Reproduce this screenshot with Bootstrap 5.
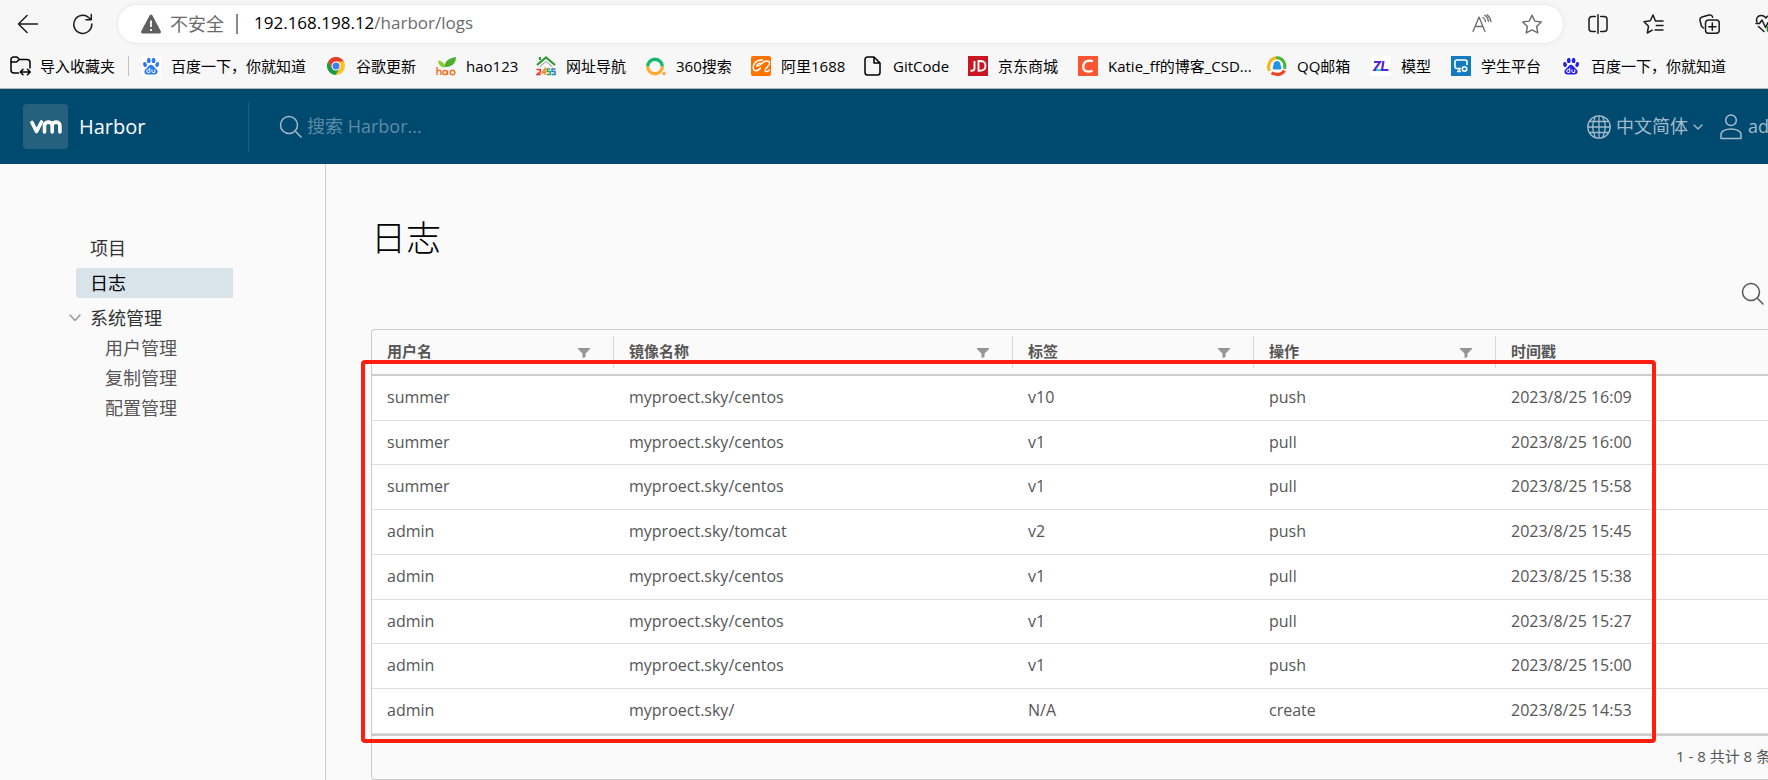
<!DOCTYPE html>
<html lang="zh-CN">
<head>
<meta charset="utf-8">
<meta name="viewport" content="width=device-width, initial-scale=1">
<title>Harbor</title>
<link href="https://cdn.jsdelivr.net/npm/bootstrap@5.3.0/dist/css/bootstrap.min.css" rel="stylesheet">
<style>
  body { font-family: "Open Sans", "Noto Sans CJK SC", sans-serif; font-size: 16px; background: #fafafa; color: #565656; overflow-x: hidden; }
  svg { display: block; flex: none; }
  a { color: inherit; text-decoration: none; }
  .plain { border: 0; background: none; padding: 0; color: inherit; display: block; }
  .stroke { fill: none; stroke: currentColor; stroke-linecap: round; stroke-linejoin: round; }

  /* browser chrome */
  .browser { background: #f7f7f7; color: #1b1b1b; border-bottom: 1px solid #b4b4b4; height: 89px; overflow: hidden; }
  .toolbar { height: 38px; margin-top: 5px; padding-left: 17px; gap: 34px; }
  .address { height: 38px; border-radius: 19px; background: #fff; box-shadow: 0 0 4px rgba(0,0,0,.1); padding: 0 20px 0 22px; margin-left: -9px; color: #6b6b6b; font-size: 17px; }
  .insecure { font-size: 18px; margin: 0 12px 0 8px; }
  .favourite { margin-left: 29px; }
  .bar { width: 2px; height: 20px; background: #8a8a8a; margin-right: 16px; }
  .url { font-size: 17px; line-height: 36px; padding-bottom: 2px; }
  .url b { font-weight: 400; color: #000; }
  .tools { width: 180px; margin-left: -9px; gap: 35px; overflow: hidden; }
  .marks { display: grid; grid-template-columns: 131px 185px 110px 100px 110px 105px 112px 105px 110px 189px 104px 80px 110px auto; font-size: 15px; line-height: 20px; color: #000; padding-left: 10px; margin-top: 13px; white-space: nowrap; }
  .marks a { display: flex; align-items: center; gap: 10px; }
  .marks a:first-child { border-right: 1px solid #c4c4c4; margin-right: 12px; gap: 9px; }

  /* application header */
  .app-header { height: 75px; background: #004a70; color: #a3bccb; padding-left: 23px; }
  .brand { width: 225px; color: #fff; font-size: 20px; gap: 11px; }
  .logo { width: 45px; height: 45px; border-radius: 4px; background: #25607f; }
  .search { border-left: 1px solid #1c5e80; height: 50px; padding-left: 30px; gap: 4px; }
  .search input { border: 0; background: none; color: #fff; padding: 0; font-size: 18px; outline: 0; }
  .search input::placeholder { color: #5d8ca6; opacity: 1; }
  .language { font-size: 18px; gap: 5px; }
  .account { width: 48px; gap: 6px; font-size: 18px; overflow: hidden; margin-left: 17px; }

  /* side navigation */
  .sidebar { width: 326px; border-right: 1px solid #ccc; padding: 69px 92px 0 76px; flex: none; }
  .sidebar a { display: block; height: 30px; line-height: 30px; padding-left: 14px; margin-bottom: 5px; color: #313131; font-size: 18px; }
  .sidebar a.active { background: #d9e4ea; color: #000; border-radius: 3px 0 0 3px; }
  .group { margin-left: -7px; color: #313131; font-size: 18px; line-height: 30px; gap: 9px; }
  .group svg { color: #999; }
  .sidebar .children a { padding-left: 29px; margin: 0; color: #565656; }

  /* log grid */
  main { min-width: 0; padding: 50px 0 0 45px; }
  h1 { font-size: 35px; font-weight: 300; line-height: 48px; color: #000; margin: 0; }
  .finder { height: 67px; padding: 20px 3px 0 0; align-items: flex-start; }
  .datagrid { border: 1px solid #ccc; border-right: 0; border-radius: 4px 0 0 4px; position: relative; }
  .datagrid table { width: 100%; table-layout: fixed; border-collapse: separate; border-spacing: 0; }
  .datagrid th { padding: 0; height: 46px; border-bottom: 2px solid #ccc; font-size: 15px; font-weight: 700; }
  .head { height: 32px; line-height: 28px; padding: 0 23px 2px 15px; border-right: 1px solid #d8d8d8; }
  th:last-child .head { border: 0; }
  .head svg { margin-top: 4px; }
  .datagrid td { height: 45px; padding: 0 15px 2px; background: #fff; border-bottom: 1px solid #ddd; line-height: 24px; }
  .datagrid tr:nth-child(4n+2) td { height: 44px; }
  .foot { border-top: 2px solid #ccc; height: 45px; font-size: 15px; padding-bottom: 2px; }
  .foot span { width: 92px; white-space: nowrap; overflow: hidden; }
  .callout { position: absolute; left: -11px; right: 112px; top: 30px; bottom: 36px; border: 4px solid #ff1e10; border-radius: 4px; pointer-events: none; }
</style>
</head>
<body>
<svg width="0" height="0" class="position-absolute" aria-hidden="true">
  <symbol id="paw" viewBox="0 0 20 20">
    <ellipse cx="4" cy="8.6" rx="1.9" ry="2.6" transform="rotate(-15 4 8.6)"/><ellipse cx="7.8" cy="4.4" rx="1.9" ry="2.7"/><ellipse cx="12.6" cy="4.4" rx="1.9" ry="2.7"/><ellipse cx="16.2" cy="8.6" rx="1.8" ry="2.6" transform="rotate(15 16.2 8.6)"/>
    <path d="M10 8.8c1.7 0 2.4 1.4 3.6 2.8 1.3 1.5 3.2 2.4 3 4.4-.2 1.7-1.5 2.5-3.2 2.4H6.6c-1.7.1-3-.7-3.2-2.4-.2-2 1.7-2.9 3-4.4C7.600 10.200 8.300 8.800 10 8.800z"/>
    <path d="M8.800 11.800v4.700H7.200a1.400 1.400 0 0 1 0-2.900h1.600M11 13.500v2c0 .700.400 1 1 1h1.800v-3" fill="none" stroke="#fff" stroke-width="1"/>
  </symbol>
  <symbol id="lens" viewBox="0 0 24 24"><circle cx="10" cy="10" r="8.500"/><path d="M16.800 16.800 22 22"/></symbol>
  <symbol id="funnel" viewBox="0 0 12 10"><path d="M0 0h12v1L7.500 5.500V9l-3 1V5.500L0 1z" fill="#959595"/></symbol>
</svg>

<header class="browser">
  <div class="toolbar d-flex align-items-center">
    <button class="plain" aria-label="后退"><svg class="stroke" width="22" height="20" viewBox="0 0 22 20" stroke-width="1.500"><path d="M20.500 10H1.500M10 1.500 1.500 10l8.500 8.500"/></svg></button>
    <button class="plain" aria-label="刷新"><svg class="stroke" width="20" height="22" viewBox="0 0 20 22" stroke-width="1.500"><path d="M18.800 11a9 9 0 1 1-3.200-6.500L18 6.500M18.300 1.500v5.300h-5.300"/></svg></button>
    <div class="address d-flex align-items-center flex-grow-1">
      <svg width="22" height="20" viewBox="0 0 22 20"><path d="M11 .500c.600 0 1 .300 1.300.800l8.500 16c.500 1-.200 2.200-1.300 2.200h-17c-1.100 0-1.800-1.200-1.300-2.200l8.500-16c.300-.500.700-.800 1.300-.800z" fill="#606060"/><path d="M11 6.500v6.500M11 15v2" stroke="#fff" stroke-width="1.800"/></svg>
      <span class="insecure">不安全</span><span class="bar"></span>
      <span class="url flex-grow-1"><b>192.168.198.12</b>/harbor/logs</span>
      <button class="plain" aria-label="大声朗读"><svg class="stroke" width="20" height="20" viewBox="0 0 20 20" stroke-width="1.300"><path d="M1 17.500 7 3l6 14.500M3.200 12.500h7.600M11 3.500c1.400.800 2.200 2 2.500 3.800M12.800 1.300c2 1.200 3.300 3.200 3.600 6M15 .700c2 1.600 3.600 4 4 7"/></svg></button>
      <button class="plain favourite" aria-label="收藏"><svg class="stroke" width="22" height="20" viewBox="0 0 22 20" stroke-width="1.400"><path d="m11 1.200 2.800 5.900 6.500.900-4.700 4.500 1.200 6.400-5.800-3.100-5.800 3.100 1.200-6.400L1.700 8l6.500-.900z"/></svg></button>
    </div>
    <div class="tools d-flex align-items-center">
      <button class="plain" aria-label="分屏"><svg class="stroke" width="20" height="20" viewBox="0 0 20 20" stroke-width="1.500"><path d="M10 .800v18.400M7.300 2.500H4a3 3 0 0 0-3 3v9a3 3 0 0 0 3 3h3.300M12.700 2.500H16a3 3 0 0 1 3 3v9a3 3 0 0 1-3 3h-3.300"/></svg></button>
      <button class="plain" aria-label="收藏夹"><svg class="stroke" width="21" height="20" viewBox="0 0 21 20" stroke-width="1.500"><path d="M20 7h-5.500L12.500 7 10 1 7.300 6.700l-6.300 1 4.500 4.600L4.300 19l5-2.800M13.300 11.500H20M12 16h8"/></svg></button>
      <button class="plain" aria-label="集锦"><svg class="stroke" width="21" height="20" viewBox="0 0 21 20" stroke-width="1.500"><path d="M4.500 14 2.600 12.500 1 6.500A3 3 0 0 1 3 3L10 1a3 3 0 0 1 3.700 2.200M9.500 6h7.700a3 3 0 0 1 3 3v7.300a3 3 0 0 1-3 3H9.500a3 3 0 0 1-3-3V9a3 3 0 0 1 3-3zM13.300 9v7.300M9.700 12.700H17"/></svg></button>
      <button class="plain" aria-label="浏览器概要"><svg class="stroke" width="22" height="20" viewBox="0 0 22 20" stroke-width="1.500"><path d="M2 8C.500 4.500 3 1.500 6 1.500c2.500 0 4 1 5 2.500 1-1.500 2.500-2.500 5-2.500M1 9.500h3.500L7 6l3.500 7.500L13 8.500M3.500 12.500 9 17.500"/><circle cx="16.500" cy="15" r="5" fill="#168a24" stroke="none"/><path d="m14 15 2 2" stroke="#fff"/></svg></button>
    </div>
  </div>
  <nav class="marks" aria-label="收藏夹栏">
    <a href="#"><svg class="stroke" width="21" height="20" viewBox="0 0 21 20" stroke-width="1.500"><path d="M8.500 17H4a3 3 0 0 1-3-3V3.500A2.500 2.500 0 0 1 3.500 1H7l2.500 2.500H17a3 3 0 0 1 3 3V12M1 6h5.500L9.500 3.500M10.500 16H20M13 13.300 10.300 16l2.700 2.700M17.500 13.300 20.200 16l-2.700 2.700"/></svg>导入收藏夹</a>
    <a href="#"><svg class="bg-white" width="20" height="20" fill="#2b79f5"><use href="#paw"/></svg>百度一下，你就知道</a>
    <a href="#"><svg width="20" height="20" viewBox="0 0 20 20"><circle cx="10" cy="10" r="9" fill="#fcc31e"/><path d="M2.200 5.500A9 9 0 0 1 17.800 5.500H10L6.100 12.200z" fill="#e33b2e"/><path d="M2.200 5.500A9 9 0 0 0 9.500 19l4.400-6.800L10 14.500 6.100 12.200z" fill="#1a9b4b"/><circle cx="10" cy="10" r="4.500" fill="#fff"/><circle cx="10" cy="10" r="3.500" fill="#3f7de8"/></svg>谷歌更新</a>
    <a href="#"><svg width="20" height="20" viewBox="0 0 20 20"><path d="M8.500 11C8.500 5 13 2 20 1c0 6-4 10.500-11.500 10z" fill="#4caf32"/><path d="M9 11.500C4 11 2.500 8 2 4.500 6.500 5 9 7.500 9 11.500z" fill="#8bcb2d"/><g fill="none" stroke="#f1762d" stroke-width="1.500"><path d="M1 11v8M1 15.500c2-2 4-1.500 4 .500v3M11.500 14.500V19"/><circle cx="9" cy="16.500" r="2.100"/><circle cx="16.500" cy="16.500" r="2.300"/></g></svg>hao123</a>
    <a href="#"><svg width="20" height="20" viewBox="0 0 20 20"><path d="M1 9 10 1.500 19 9M4 4V1" fill="none" stroke="#2f9a35" stroke-width="2.200"/><path d="M3.500 11 10 5.500l6.500 5.500" fill="none" stroke="#999"/><g fill="none" stroke-width="1.500"><path d="M.500 13.500h3.800v2.300L.800 18.500h4" stroke="#e33"/><path d="M9 18.800v-6l-3 4h4" stroke="#f58a1d"/><path d="M14.200 13h-3v2.500h3v3h-3.400" stroke="#37a443"/><path d="M19.500 13H16v2.500h3v3h-3.500" stroke="#247ed3"/></g></svg>网址导航</a>
    <a href="#"><svg width="20" height="20" viewBox="0 0 20 20" fill="none" stroke-width="3.400"><path d="M1.700 10.500a7.300 7.300 0 0 1 14.600 0" stroke="#15b86a"/><path d="M1.700 10.500a7.300 7.300 0 0 0 14.600 0" stroke="#ffac35"/><circle cx="18" cy="17.500" r="1.600" fill="#ff962d" stroke="none"/></svg>360搜索</a>
    <a href="#"><svg width="20" height="20" viewBox="0 0 20 20"><rect width="20" height="20" rx="2" fill="#ff7300"/><path d="M11.500 4C6 3.500 2.300 7 2.200 11.500c0 4.500 5 4 7.300.500M5.500 10C8 10 10 8.800 9.800 7.500 9 6.300 6 8.500 5.500 10M11 7.500c2.500-3 8-3.500 7.500 0-.300 2.500-4.500 5-4.500 7 0 2 3 1 4.300-.500" fill="none" stroke="#fff" stroke-width="1.400" stroke-linecap="round"/></svg>阿里1688</a>
    <a href="#"><svg class="stroke" width="20" height="20" viewBox="0 0 20 20" stroke-width="1.500"><path d="M4.500 1H11l6 6v9.500a2.500 2.500 0 0 1-2.500 2.500h-10A2.500 2.500 0 0 1 2 16.500v-13A2.500 2.500 0 0 1 4.500 1zM11 1v6h6"/></svg>GitCode</a>
    <a href="#"><svg width="20" height="20" viewBox="0 0 20 20"><path fill="#c81623" d="M0 0h20v20H0z"/><path d="M6.500 5v7.500c0 2-1.500 2.500-4 2M10.500 5v9.700c4.500.300 7-1 7-5S15 4.700 10.500 5z" fill="none" stroke="#fff" stroke-width="1.900"/></svg>京东商城</a>
    <a href="#"><svg width="20" height="20" viewBox="0 0 20 20"><path fill="#fc5531" d="M0 0h20v20H0z"/><path d="M15 5.200C10 3.500 5.500 5.500 5.200 10.500c-.200 4.500 4 6.300 9.300 4.300" fill="none" stroke="#fff" stroke-width="2.200"/></svg>Katie_ff的博客_CSD...</a>
    <a href="#"><svg width="20" height="20" viewBox="0 0 20 20"><circle cx="10" cy="10" r="9" fill="#fff"/><g fill="none" stroke-width="3.200"><path d="M2.500 15C0 9 3 3 9 1.800" stroke="#fbb51b"/><path d="M9 1.800c6-.500 10 5 8.500 11" stroke="#4cb533"/><path d="M17.500 14.500c-3 5-9 4.500-13 2.300" stroke="#ee4526"/></g><path d="M10 5a3.500 3.500 0 0 1 3.500 4l1 3-1 1.500h-7L5.500 12l1-3A3.500 3.500 0 0 1 10 5z" fill="#2094e5"/></svg>QQ邮箱</a>
    <a href="#"><svg width="20" height="20" viewBox="0 0 20 20"><path fill="#fff" d="M0 0h20v20H0z"/><path d="M3 6h6L3.500 14H9M12.500 5l-1.500 9h6.500" fill="none" stroke="#5a25d5" stroke-width="2.200"/><path d="M5 14h5" stroke="#27cbd8" stroke-width="2"/></svg>模型</a>
    <a href="#"><svg width="20" height="20" viewBox="0 0 20 20"><path fill="#147bc1" d="M0 0h20v20H0z"/><g fill="none" stroke="#fff" stroke-width="1.600"><path d="M10 12.500H6a2 2 0 0 1-2-2V6a2 2 0 0 1 2-2h8a2 2 0 0 1 2 2v3M6 15.500h4M8 12.500v3"/><circle cx="13.500" cy="13" r="2.200"/></g></svg>学生平台</a>
    <a href="#"><svg class="bg-white" width="20" height="20" fill="#2522e8"><use href="#paw"/></svg>百度一下，你就知道</a>
  </nav>
</header>

<header class="app-header d-flex align-items-center">
  <a href="#" class="brand d-flex align-items-center">
    <span class="logo d-flex align-items-center justify-content-center"><svg class="stroke" width="32" height="14" viewBox="0 0 32 14" stroke-width="3.600"><path d="m2 2.500 4.500 9 5-9.500M14.500 12V5.500c0-4.500 7.700-4.500 7.700 0V12M22.200 5.500c0-4.500 7.700-4.500 7.700 0V12"/></svg></span>Harbor
  </a>
  <div class="search d-flex align-items-center flex-grow-1">
    <svg class="stroke" width="24" height="24" stroke-width="1.500"><use href="#lens"/></svg>
    <input type="text" aria-label="搜索 Harbor" placeholder="搜索 Harbor...">
  </div>
  <button class="plain language d-flex align-items-center">
    <svg class="stroke" width="24" height="24" viewBox="0 0 24 24" stroke-width="1.300"><circle cx="12" cy="12" r="11.200"/><path d="M12 1v22M1 12h22M3 6.500h18M3 17.500h18M8.500 1.500C5 8 5 16 8.500 22.500M15.500 1.500c3.500 6.500 3.500 14.500 0 21"/></svg>中文简体
    <svg class="stroke" width="10" height="6" viewBox="0 0 10 6" stroke-width="1.400"><path d="m1 1 4 4 4-4"/></svg>
  </button>
  <button class="plain account d-flex align-items-center">
    <svg class="stroke" width="22" height="26" viewBox="0 0 22 26" stroke-width="1.500"><circle cx="11" cy="6.300" r="5.300"/><path d="M1 24.500v-4C1 17 6 15 11 15s10 2 10 5.500v4z"/></svg>ad
  </button>
</header>

<div class="d-flex align-items-stretch">
  <nav class="sidebar" aria-label="主导航">
    <a href="#">项目</a>
    <a href="#" class="active">日志</a>
    <button class="plain group d-flex align-items-center" aria-expanded="true"><svg class="stroke" width="12" height="8" viewBox="0 0 12 8" stroke-width="1.500"><path d="m1 1 5 5.500L11 1"/></svg>系统管理</button>
    <div class="children"><a href="#">用户管理</a><a href="#">复制管理</a><a href="#">配置管理</a></div>
  </nav>
  <main class="flex-grow-1">
    <h1>日志</h1>
    <div class="finder d-flex justify-content-end"><button class="plain" aria-label="搜索"><svg class="stroke" width="24" height="24" stroke-width="1.500"><use href="#lens"/></svg></button></div>
    <div class="datagrid">
      <table>
        <colgroup><col style="width:242px"><col style="width:399px"><col style="width:241px"><col style="width:242px"><col></colgroup>
        <thead><tr>
          <th scope="col"><div class="head d-flex align-items-center justify-content-between">用户名<svg width="12" height="10"><use href="#funnel"/></svg></div></th>
          <th scope="col"><div class="head d-flex align-items-center justify-content-between">镜像名称<svg width="12" height="10"><use href="#funnel"/></svg></div></th>
          <th scope="col"><div class="head d-flex align-items-center justify-content-between">标签<svg width="12" height="10"><use href="#funnel"/></svg></div></th>
          <th scope="col"><div class="head d-flex align-items-center justify-content-between">操作<svg width="12" height="10"><use href="#funnel"/></svg></div></th>
          <th scope="col"><div class="head d-flex align-items-center">时间戳</div></th>
        </tr></thead>
        <tbody>
          <tr><td>summer</td><td>myproect.sky/centos</td><td>v10</td><td>push</td><td>2023/8/25 16:09</td></tr>
          <tr><td>summer</td><td>myproect.sky/centos</td><td>v1</td><td>pull</td><td>2023/8/25 16:00</td></tr>
          <tr><td>summer</td><td>myproect.sky/centos</td><td>v1</td><td>pull</td><td>2023/8/25 15:58</td></tr>
          <tr><td>admin</td><td>myproect.sky/tomcat</td><td>v2</td><td>push</td><td>2023/8/25 15:45</td></tr>
          <tr><td>admin</td><td>myproect.sky/centos</td><td>v1</td><td>pull</td><td>2023/8/25 15:38</td></tr>
          <tr><td>admin</td><td>myproect.sky/centos</td><td>v1</td><td>pull</td><td>2023/8/25 15:27</td></tr>
          <tr><td>admin</td><td>myproect.sky/centos</td><td>v1</td><td>push</td><td>2023/8/25 15:00</td></tr>
          <tr><td>admin</td><td>myproect.sky/</td><td>N/A</td><td>create</td><td>2023/8/25 14:53</td></tr>
        </tbody>
      </table>
      <div class="foot d-flex align-items-center justify-content-end"><span>1 - 8 共计 8 条</span></div>
      <div class="callout"></div>
    </div>
  </main>
</div>
<script src="https://cdn.jsdelivr.net/npm/bootstrap@5.3.0/dist/js/bootstrap.bundle.min.js"></script>
</body>
</html>
